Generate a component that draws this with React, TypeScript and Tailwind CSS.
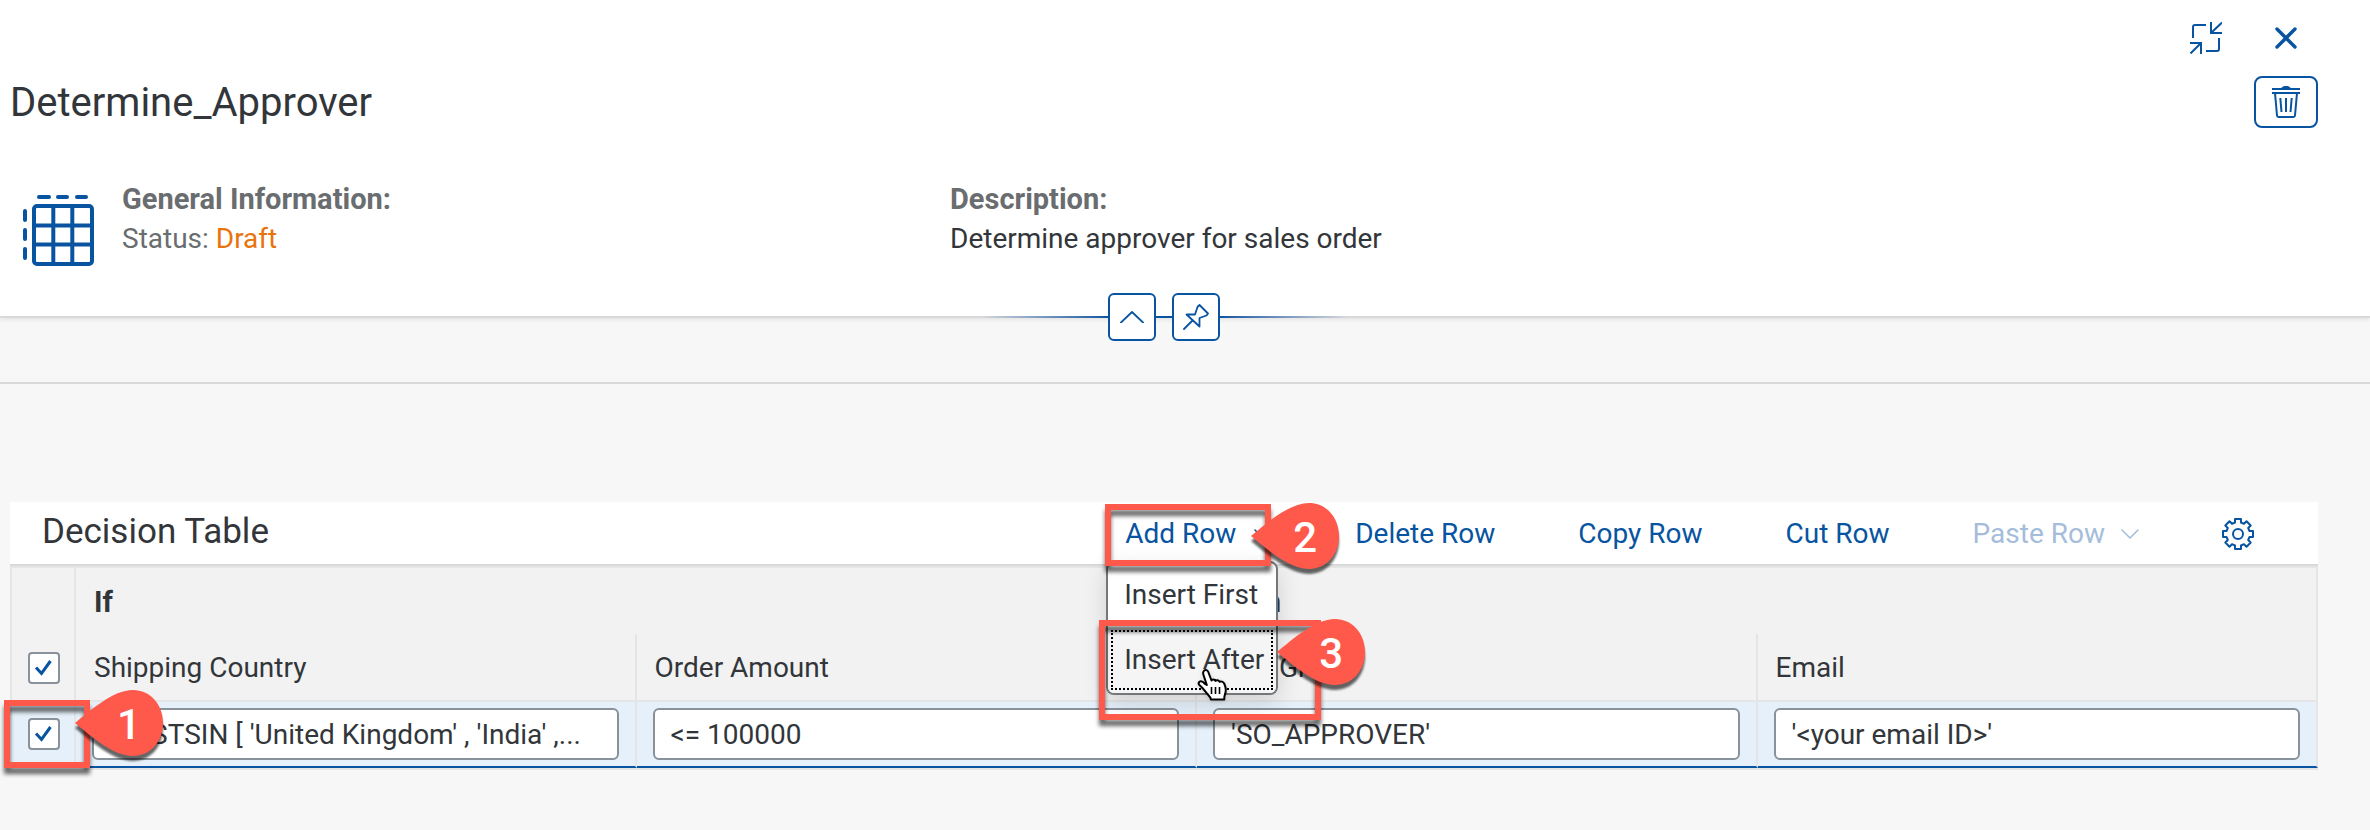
import React from "react";

const columns = [
  { label: "Shipping Country", value: "EXISTSIN [ 'United Kingdom' , 'India' ,..." },
  { label: "Order Amount", value: "<= 100000" },
  { label: "User Group", value: "'SO_APPROVER'" },
  { label: "Email", value: "'<your email ID>'" },
];

function ExitFullScreenIcon() {
  return (
    <svg width="32" height="32" viewBox="0 0 32 32" fill="none" stroke="currentColor" strokeWidth="2" aria-hidden="true">
      <path d="M16 3H5a2 2 0 0 0-2 2v11" />
      <path d="M21 0v11h11M21.500 10.500L32 0.500" />
      <path d="M16 29h11a2 2 0 0 0 2-2V16" />
      <path d="M0 21h11v11M10.500 21.500L0.500 31.500" />
    </svg>
  );
}

function CloseIcon() {
  return (
    <svg width="22" height="22" viewBox="0 0 22 22" fill="none" stroke="currentColor" strokeWidth="3.400" strokeLinecap="round" aria-hidden="true">
      <path d="M2 2l18 18M20 2L2 20" />
    </svg>
  );
}

function TrashIcon() {
  return (
    <svg width="28" height="32" viewBox="0 0 28 32" fill="none" stroke="currentColor" strokeWidth="2" aria-hidden="true">
      <path d="M0 3h28M0 7h28" />
      <path d="M9 2.500c1-2 3-2.500 5-2.500s4 .5 5 2.500z" fill="currentColor" stroke="none" />
      <path d="M3 7l2 22.500a1.600 1.600 0 0 0 1.600 1.500h14.800a1.600 1.600 0 0 0 1.600-1.500L25 7" />
      <path d="M8.300 12l1.200 14M14 12v14M19.700 12l-1.200 14" />
    </svg>
  );
}

function TableIcon() {
  return (
    <svg width="72" height="72" viewBox="0 0 72 72" fill="none" stroke="currentColor" strokeWidth="4" aria-hidden="true">
      <rect x="12" y="12" width="58" height="58" rx="3" />
      <path d="M31.300 12v58M50.300 12v58M12 31.500h58M12 50.500h58" />
      <g strokeLinecap="round">
        <path d="M17 3h10M36 3h9M55 3h9" />
        <path d="M3 17v9M3 36v9M3 55v9" />
      </g>
    </svg>
  );
}

function ChevronUpIcon() {
  return (
    <svg width="24" height="12" viewBox="0 0 24 12" fill="none" stroke="currentColor" strokeWidth="1.800" strokeLinecap="round" strokeLinejoin="round" aria-hidden="true">
      <path d="M1 11.500L12 1l11 10.500" />
    </svg>
  );
}

function PinIcon() {
  return (
    <svg width="26" height="26" viewBox="0 0 26 26" fill="none" stroke="currentColor" strokeWidth="1.800" strokeLinecap="round" strokeLinejoin="round" aria-hidden="true">
      <path d="M16.500 1L25 9.500l-1.500 2-7 2.500v8.500L3.500 10.500H12l2.500-7.500z" />
      <path d="M9.500 16.500L1 25" />
    </svg>
  );
}

function ChevronDownIcon() {
  return (
    <svg width="18" height="10" viewBox="0 0 18 10" fill="none" stroke="currentColor" strokeWidth="1.600" strokeLinecap="round" strokeLinejoin="round" aria-hidden="true">
      <path d="M1 1l8 8 8-8" />
    </svg>
  );
}

function GearIcon() {
  return (
    <svg width="32" height="32" viewBox="0 0 32 32" fill="none" stroke="currentColor" strokeWidth="2" strokeLinejoin="round" aria-hidden="true">
      <path d="M13 1h6v3.500l3 1.300 2.500-2.500 4.200 4.200L26.200 10l1.300 3H31v6h-3.500l-1.300 3 2.500 2.500-4.200 4.200L22 26.200l-3 1.300V31h-6v-3.500l-3-1.300-2.500 2.500-4.200-4.200L5.800 22l-1.300-3H1v-6h3.500l1.300-3-2.500-2.500 4.200-4.200L10 5.800l3-1.300z" />
      <circle cx="16" cy="16" r="5" />
    </svg>
  );
}

function HandCursor() {
  return (
    <svg width="30" height="33" viewBox="0 0 30 33" className="drop-shadow-sm" aria-hidden="true">
      <path
        d="M6.500 3.500c1-2 3.800-2 4.800.5l3.200 8.500c.5-1.500 3.200-1.600 4 .4.900-1.200 3.400-1 4 .9 1.400-.8 3.800-.2 4.700 1.700 1.800 3.800 2.300 7.500.6 11.500-.6 1.300-.5 2.500-.5 4.500H14c-.4-2-1.500-3.300-3.500-5.500-2-2.300-4-5-6.500-7.500-2.600-2-3-3.500-1.500-4.700 1.700-1.200 3.700.2 5.500 2.200L9.800 17 6.500 7c-.5-1.400-.6-2.400 0-3.500z"
        fill="white"
        stroke="black"
        strokeWidth="2"
        strokeLinejoin="round"
      />
      <path d="M14.500 19v7M18.500 19v7M22.500 19v7" stroke="black" strokeWidth="1.600" />
    </svg>
  );
}

function Marker({ children }: { children: string }) {
  return (
    <span className="grid h-[66px] w-[88px] text-white">
      <svg width="88" height="66" viewBox="0 0 88 66" className="col-start-1 row-start-1 drop-shadow-[0_5px_1px_rgba(0,0,0,0.6)]" aria-hidden="true">
        <path d="M0 33C16 20 38 0 58 0c17 0 30 14 30 33S75 66 58 66C38 66 16 46 0 33z" fill="#ff594b" />
      </svg>
      <span className="z-10 col-start-1 row-start-1 self-center pt-1 pl-[42px] text-[42px] leading-none font-medium">
        {children}
      </span>
    </span>
  );
}

function Highlight({ className }: { className: string }) {
  return (
    <span
      className={
        "pointer-events-none absolute border-6 border-[#ff594b] drop-shadow-[0_6px_2px_rgba(0,0,0,0.6)] " + className
      }
    />
  );
}

function Checkbox({ label }: { label: string }) {
  return (
    <label className="mx-auto grid size-8">
      <input
        type="checkbox"
        defaultChecked
        aria-label={label}
        className="peer col-start-1 row-start-1 size-8 appearance-none rounded-sm border-2 border-[#89919a] bg-white"
      />
      <svg width="32" height="32" viewBox="0 0 32 32" fill="none" stroke="#0854a0" strokeWidth="3" className="invisible pointer-events-none col-start-1 row-start-1 peer-checked:visible" aria-hidden="true">
        <path d="M8 15.500l5.500 6L22.500 9" />
      </svg>
    </label>
  );
}

export default function App() {
  return (
    <div className="min-h-screen bg-[#f7f7f7] font-[Roboto,'Liberation_Sans',sans-serif] text-[28px] leading-10 text-[#32363a]">
      <header className="relative border-b-2 border-[#d9d9d9] bg-white pr-[52px] pb-[50px] pl-[10px] shadow-[0_2px_4px_rgba(0,0,0,0.08)]">
        <div className="flex h-19 items-center justify-end gap-[53px] pr-[21px] text-[#0854a0]">
          <button type="button" aria-label="Exit full screen"><ExitFullScreenIcon /></button>
          <button type="button" aria-label="Close"><CloseIcon /></button>
        </div>
        <div className="flex items-center justify-between">
          <h1 className="pt-[2px] text-[40px] leading-[50px]">Determine_Approver</h1>
          <button type="button" aria-label="Delete" className="flex h-[52px] w-16 items-center justify-center rounded-lg border-2 border-[#0854a0] text-[#0854a0]">
            <TrashIcon />
          </button>
        </div>
        <div className="grid grid-cols-[830px_1fr] gap-x-[110px] pt-[51px]">
          <div className="flex gap-7 pl-3">
            <span className="pt-[15px] text-[#0854a0]"><TableIcon /></span>
            <div className="text-[#6a6d70]">
              <h2 className="text-[29px] leading-10 font-bold">General Information:</h2>
              <p>Status: <span className="text-[#e9730c]">Draft</span></p>
            </div>
          </div>
          <div>
            <h2 className="text-[29px] leading-10 font-bold text-[#6a6d70]">Description:</h2>
            <p>Determine approver for sales order</p>
          </div>
        </div>
        <div className="absolute inset-x-0 -bottom-[25px] flex items-center justify-center pr-[42px] text-[#0854a0]">
          <span className="h-[2px] w-32 bg-linear-to-l from-[#0854a0] to-[#d9d9d9]" />
          <button type="button" aria-label="Collapse header" className="flex size-12 items-center justify-center rounded-md border-2 border-[#0854a0] bg-white">
            <ChevronUpIcon />
          </button>
          <span className="h-[2px] w-4 bg-[#0854a0]" />
          <button type="button" aria-label="Pin header" className="flex size-12 items-center justify-center rounded-md border-2 border-[#0854a0] bg-white">
            <PinIcon />
          </button>
          <span className="h-[2px] w-32 bg-linear-to-r from-[#0854a0] to-[#d9d9d9]" />
        </div>
      </header>
      <div className="h-[66px] border-b-2 border-[#d9d9d9]" />

      <main className="pt-[118px] pr-[52px] pl-[10px]">
        <div className="flex h-16 items-center justify-between border-b-2 border-[#d9d9d9] bg-white pr-16 pl-8 text-[#0854a0]">
          <h2 className="pb-[2px] text-[35px] text-[#32363a]">Decision Table</h2>
          <div className="flex items-center gap-[83px] pt-[2px]">
            <div className="relative">
              <button type="button" aria-haspopup="menu" aria-expanded="true" className="flex items-center gap-[18px]">
                Add Row <ChevronDownIcon />
              </button>
              <div role="menu" className="absolute top-[47px] -left-[19px] z-10 w-[172px] overflow-hidden rounded-lg border-2 border-[#74777a] bg-white text-[#32363a] shadow-[0_8px_24px_rgba(0,0,0,0.14)]">
                <button type="button" role="menuitem" className="block h-16 w-full pl-4 text-left whitespace-nowrap">Insert First</button>
                <button type="button" role="menuitem" className="block h-[66px] w-full bg-[#f5f5f5] p-[3px] text-left whitespace-nowrap">
                  <span className="flex h-full items-center border-2 border-dotted border-black pl-[11px]">Insert After</span>
                </button>
              </div>
              <Highlight className="-top-[10px] -left-5 z-20 h-[62px] w-[166px]" />
              <Highlight className="top-[106px] -left-[26px] z-20 h-[100px] w-[222px]" />
              <span className="absolute -top-[11px] left-[126px] z-20"><Marker>2</Marker></span>
              <span className="absolute top-[105px] left-[152px] z-20"><Marker>3</Marker></span>
              <span className="absolute top-[154px] left-[72px] z-30"><HandCursor /></span>
            </div>
            <button type="button">Delete Row</button>
            <button type="button">Copy Row</button>
            <button type="button">Cut Row</button>
            <button type="button" disabled className="flex items-center gap-4 text-[#a5bddb]">
              Paste Row <ChevronDownIcon />
            </button>
            <button type="button" aria-label="Settings"><GearIcon /></button>
          </div>
        </div>

        <table className="w-full table-fixed border-separate border-spacing-0 border-2 border-r-0 border-[#e5e5e5] bg-[#f2f2f2] text-left">
          <thead>
            <tr className="h-[66px] text-[29px]">
              <td className="w-16 border-r-2 border-[#e5e5e5]" />
              <th scope="colgroup" colSpan={2} className="pt-[2px] pl-[18px] font-bold">If</th>
              <th scope="colgroup" colSpan={2} className="border-r-2 border-[#e5e5e5] pt-[2px] pl-[18px] font-bold">Then</th>
            </tr>
            <tr className="h-[68px]">
              <th className="border-r-2 border-b-2 border-[#e5e5e5] pt-[2px] pl-[2px]"><Checkbox label="Select all rows" /></th>
              {columns.map((column) => (
                <th key={column.label} scope="col" className="border-r-2 border-b-2 border-[#e5e5e5] pt-[2px] pl-[18px] font-normal">
                  {column.label}
                </th>
              ))}
            </tr>
          </thead>
          <tbody>
            <tr className="h-[66px] bg-[#e5f0fa]">
              <td className="relative border-r-2 border-b-2 border-[#e5e5e5] border-b-[#0854a0] pl-[2px]">
                <Checkbox label="Select row 1" />
                <Highlight className="-top-[2px] -left-2 h-[68px] w-[86px]" />
                <span className="absolute -top-3 left-[63px] z-10"><Marker>1</Marker></span>
              </td>
              {columns.map((column) => (
                <td key={column.label} className="border-r-2 border-b-2 border-[#e5e5e5] border-b-[#0854a0] px-4">
                  <input
                    type="text"
                    aria-label={column.label}
                    defaultValue={column.value}
                    className="block h-[52px] w-full rounded-md border-2 border-[#89919a] bg-white px-4 text-ellipsis"
                  />
                </td>
              ))}
            </tr>
          </tbody>
        </table>
      </main>
    </div>
  );
}
